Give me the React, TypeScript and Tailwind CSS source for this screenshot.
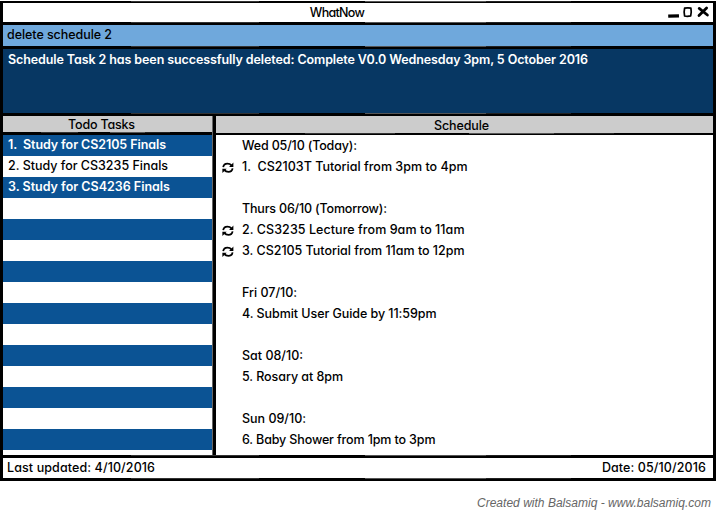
import { useLayoutEffect, useRef, useState } from "react";
import clsx from "clsx";

type FitProps = { width: number; className?: string; children: string };

/* Single line of text whose tracking is adjusted to span the given width. */
function Fit({ width, className, children }: FitProps) {
  const ref = useRef<HTMLSpanElement>(null);
  const [spacing, setSpacing] = useState(0);
  useLayoutEffect(() => {
    const el = ref.current;
    if (!el) return;
    el.style.letterSpacing = "0px";
    const natural = el.getBoundingClientRect().width;
    setSpacing((width - natural) / (children.length - 1));
  }, [width, children]);
  return (
    <span
      ref={ref}
      className={clsx("inline-block whitespace-pre", className)}
      style={{ letterSpacing: `${spacing}px` }}
    >
      {children}
    </span>
  );
}

/* Hand-inked horizontal rule: solid black with uneven grey edges. */
function Rule({ className }: { className?: string }) {
  return (
    <div className={clsx("flex w-full shrink-0 flex-col bg-black", className)}>
      <div className="flex h-px w-full">
        <div className="w-[18%]" />
        <div className="w-[18%] bg-[#333]" />
        <div className="w-[15%]" />
        <div className="w-[17%] bg-[#555]" />
        <div className="w-[12%] bg-[#222]" />
      </div>
      <div className="flex-1" />
    </div>
  );
}

function RepeatIcon() {
  return (
    <svg viewBox="0 0 12 12" className="h-3 w-3" fill="none" stroke="#000" strokeWidth="1.8">
      <path d="M1.2 5.2C1.6 2.8 3 1.7 5.4 1.7C7.2 1.7 8.4 2.2 9.4 3.4" />
      <path d="M10.6 6.4C10.2 8.8 8.8 9.9 6.4 9.9C4.6 9.9 3.4 9.4 2.4 8.2" />
      <path d="M11.4 0.6V4.9H7.1Z" fill="#000" stroke="none" />
      <path d="M0.4 11V6.7H4.7Z" fill="#000" stroke="none" />
    </svg>
  );
}

const todos = [
  { text: "1.  Study for CS2105 Finals", width: 158 },
  { text: "2. Study for CS3235 Finals", width: 160 },
  { text: "3. Study for CS4236 Finals", width: 162 },
];

const schedule = [
  { text: "Wed 05/10 (Today):", width: 115 },
  { text: "1.  CS2103T Tutorial from 3pm to 4pm", width: 225.5, repeat: true },
  null,
  { text: "Thurs 06/10 (Tomorrow):", width: 145 },
  { text: "2. CS3235 Lecture from 9am to 11am", width: 222.5, repeat: true },
  { text: "3. CS2105 Tutorial from 11am to 12pm", width: 222.5, repeat: true },
  null,
  { text: "Fri 07/10:", width: 55 },
  { text: "4. Submit User Guide by 11:59pm", width: 194.5 },
  null,
  { text: "Sat 08/10:", width: 61 },
  { text: "5. Rosary at 8pm", width: 101 },
  null,
  { text: "Sun 09/10:", width: 64 },
  { text: "6. Baby Shower from 1pm to 3pm", width: 193.5 },
];

export default function App() {
  return (
    <div className="flex h-[512px] w-[716px] flex-col overflow-hidden bg-white pt-px font-['Inter',sans-serif] text-[12.5px] leading-[20px] font-[450] text-black [font-feature-settings:'cv11']">
      <div className="flex h-[480px] shrink-0 flex-col border-r-[3px] border-l-[3px] border-black">
        <Rule className="h-[2px]" />
        <header className="flex h-[19px] shrink-0 items-center bg-white">
          <div className="flex-1 pl-[18px] text-center leading-[19px]">
            <Fit width={55}>WhatNow</Fit>
          </div>
          <svg viewBox="0 0 60 19" className="h-[19px] w-[60px]" fill="none" stroke="#000" strokeLinecap="round" strokeLinejoin="round">
            <path d="M15.2 13.2L26 12.8" strokeWidth="3.2" strokeLinecap="butt" />
            <path d="M31.6 5.2Q34.9 4.5 37.9 5.2Q38.7 9 37.7 12.9Q34.4 13.7 31.6 13Q30.6 9.4 31.6 5.2Z" strokeWidth="1.7" />
            <path d="M46.2 5.4L54.4 12M53.6 5L46 12.4" strokeWidth="2.8" />
          </svg>
        </header>
        <Rule className="h-[3px]" />
        <div className="h-[21px] shrink-0 bg-[#6fa8dc] pl-[4px] leading-[20px]">
          <Fit width={105}>delete schedule 2</Fit>
        </div>
        <Rule className="h-[3px]" />
        <div className="h-[64px] shrink-0 bg-[#073763] pl-[5px] font-semibold leading-[21px] text-white">
          <Fit width={580}>Schedule Task 2 has been successfully deleted: Complete V0.0 Wednesday 3pm, 5 October 2016</Fit>
        </div>
        <Rule className="h-[3px]" />
        <main className="flex min-h-0 flex-1">
          <section className="flex w-[209px] shrink-0 flex-col">
            <h2 className="h-[16px] shrink-0 bg-[#ccc] pr-[12px] text-center leading-[17px]">
              <Fit width={67}>Todo Tasks</Fit>
            </h2>
            <Rule className="h-[3px]" />
            <ul>
              {Array.from({ length: 15 }, (_, i) => (
                <li
                  key={i}
                  className={clsx(
                    "h-[21px] pl-[5px] leading-[19px]",
                    i % 2 === 0 ? "bg-[#0b5394] text-white" : "bg-white",
                    i < 3 && i % 2 === 0 && "font-semibold",
                  )}
                >
                  {todos[i] && <Fit width={todos[i].width}>{todos[i].text}</Fit>}
                </li>
              ))}
            </ul>
          </section>
          <div className="w-[4px] shrink-0 border-l border-[#666] bg-black" />
          <section className="flex flex-1 flex-col">
            <h2 className="h-[17px] shrink-0 bg-[#ccc] pr-[6px] text-center leading-[19px]">
              <Fit width={55}>Schedule</Fit>
            </h2>
            <Rule className="h-[2px]" />
            <ul>
              {schedule.map((row, i) => (
                <li key={i} className="flex h-[21px] items-start leading-[21px]">
                  <div className="w-[26px] shrink-0 pt-[6px] pl-[6px]">{row?.repeat && <RepeatIcon />}</div>
                  {row && <Fit width={row.width}>{row.text}</Fit>}
                </li>
              ))}
            </ul>
          </section>
        </main>
        <Rule className="h-[3px]" />
        <footer className="flex h-[20px] shrink-0 justify-between bg-white pr-[7px] pl-[4px] leading-[19px]">
          <Fit width={148}>Last updated: 4/10/2016</Fit>
          <Fit width={104}>Date: 05/10/2016</Fit>
        </footer>
        <Rule className="h-[3px]" />
      </div>
      <div className="pt-[12px] pr-[5px] text-right font-['Liberation_Sans',Arial,sans-serif] text-[12px] font-normal text-[#666] italic">
        <Fit width={234}>Created with Balsamiq - www.balsamiq.com</Fit>
      </div>
    </div>
  );
}
